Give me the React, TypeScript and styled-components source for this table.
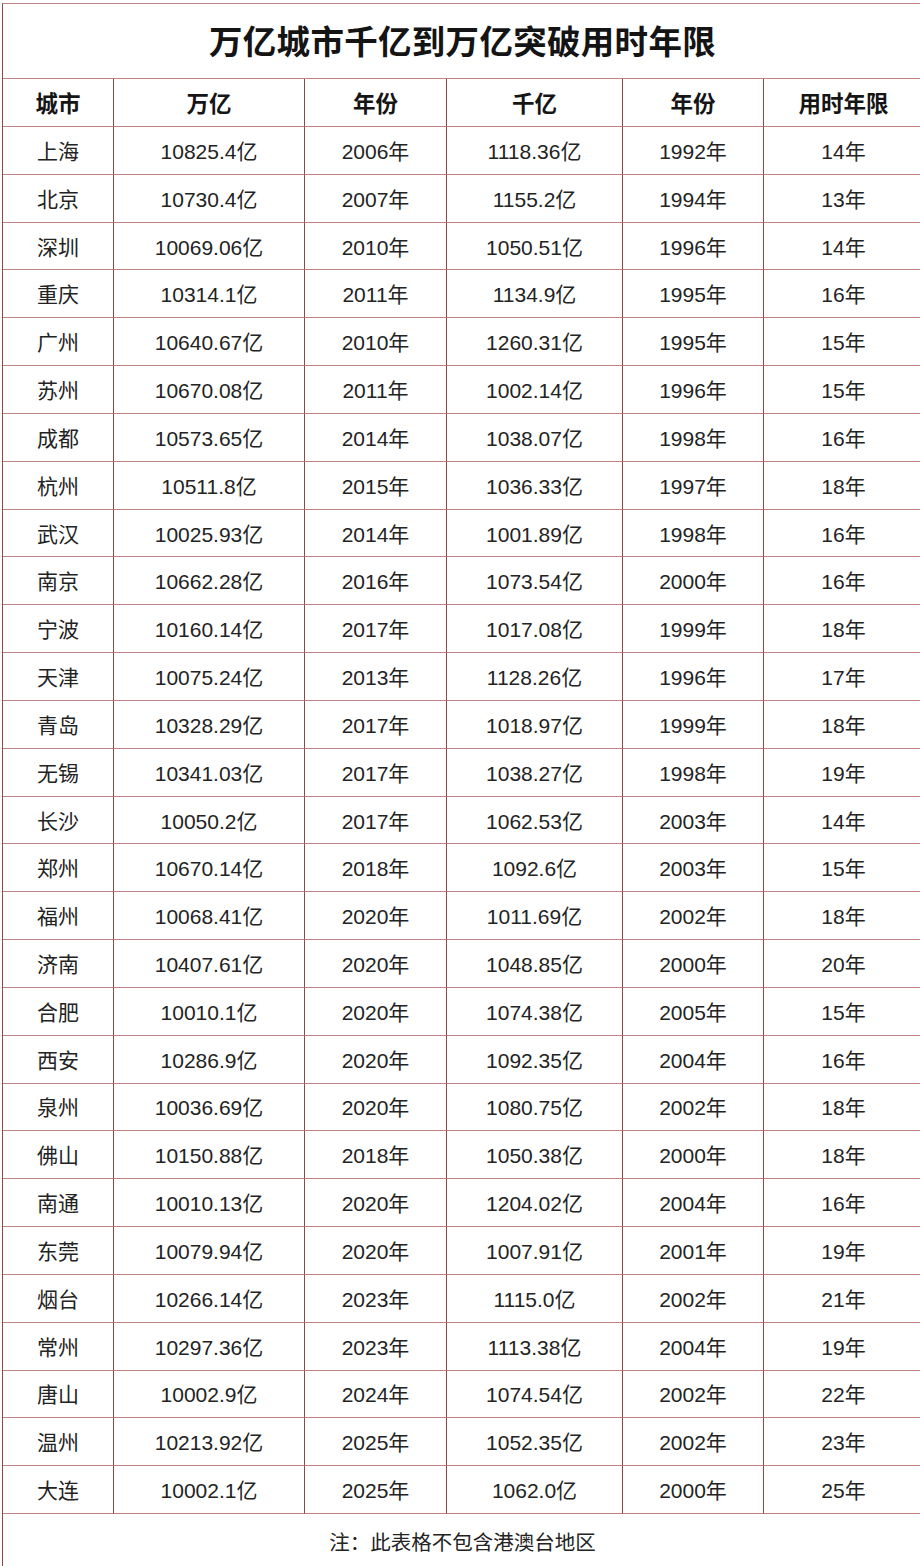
import React from "react";
import styled, { createGlobalStyle } from "styled-components";

const VLINE = "#8f4848";
const HLINE = "#bf8282";

const GlobalStyle = createGlobalStyle`
  html, body {
    margin: 0;
    padding: 0;
    background: #ffffff;
    overflow: hidden;
  }
  body {
    font-family: "Liberation Sans", "Noto Sans CJK SC", "Noto Sans", sans-serif;
    color: #222;
  }
`;

const Page = styled.div`
  width: 920px;
  height: 1566px;
  padding: 3px 0 0 2px;
  box-sizing: border-box;
  overflow: hidden;
  background: #fff;
`;

const Sheet = styled.div`
  width: 922px;
  border-left: 1px solid ${VLINE};
  border-top: 1px solid ${HLINE};
  box-sizing: border-box;
`;

const Title = styled.div`
  height: 75px;
  border-bottom: 1px solid ${HLINE};
  box-sizing: border-box;
  display: flex;
  align-items: center;
  justify-content: center;
  padding: 0 2px 3px 0;
  font-family: "Noto Sans CJK SC", sans-serif;
  font-size: 33.5px;
  font-weight: 700;
  color: #141414;
  letter-spacing: 0.3px;
`;

const Row = styled.div<{ $h: number }>`
  display: grid;
  grid-template-columns: 111px 191px 142px 176px 141px 160px;
  height: ${(p) => p.$h}px;
`;

const Cell = styled.div<{ $head?: boolean }>`
  border-right: 1px solid ${VLINE};
  border-bottom: 1px solid ${HLINE};
  box-sizing: border-box;
  display: flex;
  align-items: center;
  justify-content: center;
  font-size: ${(p) => (p.$head ? "22.5px" : "21px")};
  font-weight: ${(p) => (p.$head ? 700 : 400)};
  font-family: ${(p) =>
    p.$head ? '"Noto Sans CJK SC", sans-serif' : '"Liberation Sans", "Noto Sans CJK SC", sans-serif'};
  color: ${(p) => (p.$head ? "#151515" : "#232323")};
  white-space: nowrap;
  padding-bottom: 1px;
`;

const Footer = styled.div`
  height: 53px;
  display: flex;
  align-items: center;
  justify-content: center;
  font-family: "Noto Sans CJK SC", sans-serif;
  font-size: 20.5px;
  color: #232323;
  padding: 0 2px 3px 0;
`;

const headers = ["城市", "万亿", "年份", "千亿", "年份", "用时年限"];

const rows: string[][] = [
  ["上海", "10825.4亿", "2006年", "1118.36亿", "1992年", "14年"],
  ["北京", "10730.4亿", "2007年", "1155.2亿", "1994年", "13年"],
  ["深圳", "10069.06亿", "2010年", "1050.51亿", "1996年", "14年"],
  ["重庆", "10314.1亿", "2011年", "1134.9亿", "1995年", "16年"],
  ["广州", "10640.67亿", "2010年", "1260.31亿", "1995年", "15年"],
  ["苏州", "10670.08亿", "2011年", "1002.14亿", "1996年", "15年"],
  ["成都", "10573.65亿", "2014年", "1038.07亿", "1998年", "16年"],
  ["杭州", "10511.8亿", "2015年", "1036.33亿", "1997年", "18年"],
  ["武汉", "10025.93亿", "2014年", "1001.89亿", "1998年", "16年"],
  ["南京", "10662.28亿", "2016年", "1073.54亿", "2000年", "16年"],
  ["宁波", "10160.14亿", "2017年", "1017.08亿", "1999年", "18年"],
  ["天津", "10075.24亿", "2013年", "1128.26亿", "1996年", "17年"],
  ["青岛", "10328.29亿", "2017年", "1018.97亿", "1999年", "18年"],
  ["无锡", "10341.03亿", "2017年", "1038.27亿", "1998年", "19年"],
  ["长沙", "10050.2亿", "2017年", "1062.53亿", "2003年", "14年"],
  ["郑州", "10670.14亿", "2018年", "1092.6亿", "2003年", "15年"],
  ["福州", "10068.41亿", "2020年", "1011.69亿", "2002年", "18年"],
  ["济南", "10407.61亿", "2020年", "1048.85亿", "2000年", "20年"],
  ["合肥", "10010.1亿", "2020年", "1074.38亿", "2005年", "15年"],
  ["西安", "10286.9亿", "2020年", "1092.35亿", "2004年", "16年"],
  ["泉州", "10036.69亿", "2020年", "1080.75亿", "2002年", "18年"],
  ["佛山", "10150.88亿", "2018年", "1050.38亿", "2000年", "18年"],
  ["南通", "10010.13亿", "2020年", "1204.02亿", "2004年", "16年"],
  ["东莞", "10079.94亿", "2020年", "1007.91亿", "2001年", "19年"],
  ["烟台", "10266.14亿", "2023年", "1115.0亿", "2002年", "21年"],
  ["常州", "10297.36亿", "2023年", "1113.38亿", "2004年", "19年"],
  ["唐山", "10002.9亿", "2024年", "1074.54亿", "2002年", "22年"],
  ["温州", "10213.92亿", "2025年", "1052.35亿", "2002年", "23年"],
  ["大连", "10002.1亿", "2025年", "1062.0亿", "2000年", "25年"],
];

export default function App() {
  return (
    <>
      <GlobalStyle />
      <Page>
        <Sheet>
          <Title>万亿城市千亿到万亿突破用时年限</Title>
          <Row $h={48}>
            {headers.map((h, i) => (
              <Cell key={i} $head>
                {h}
              </Cell>
            ))}
          </Row>
          {rows.map((r, ri) => (
            <Row key={ri} $h={47.83}>
              {r.map((c, ci) => (
                <Cell key={ci}>{c}</Cell>
              ))}
            </Row>
          ))}
          <Footer>注：此表格不包含港澳台地区</Footer>
        </Sheet>
      </Page>
    </>
  );
}
